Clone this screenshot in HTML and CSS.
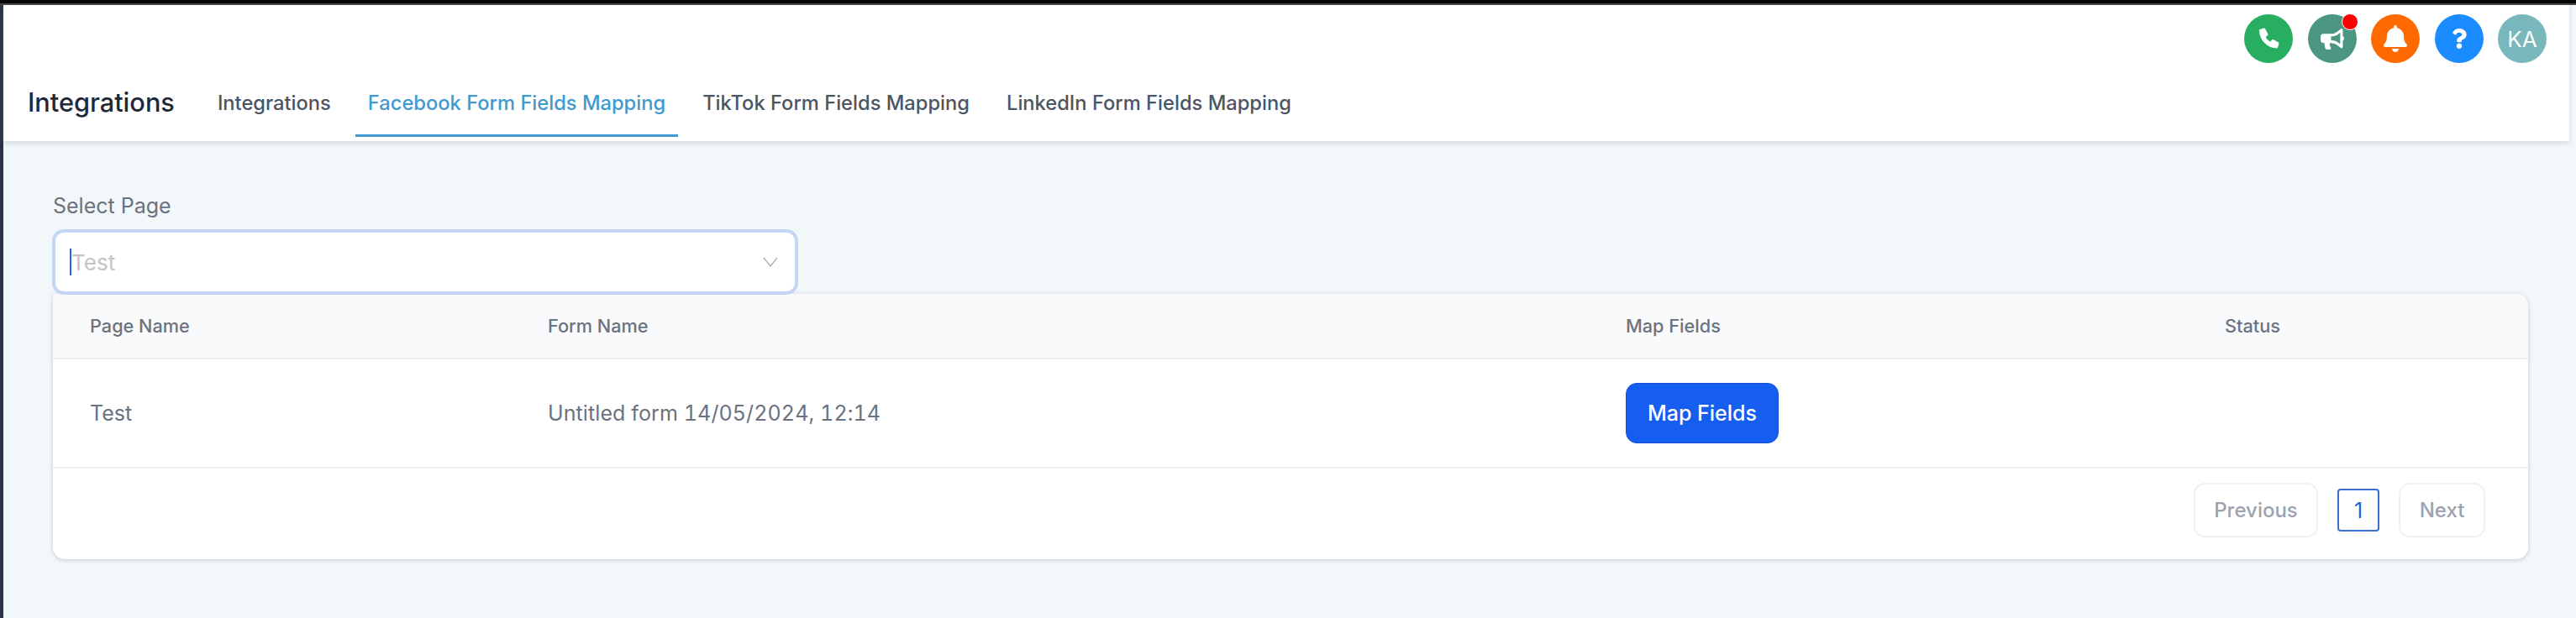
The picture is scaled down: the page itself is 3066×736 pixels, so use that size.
FILE: index.html
```html
<!DOCTYPE html>
<html lang="en">
<head>
<meta charset="utf-8">
<title>Integrations</title>
<link rel="stylesheet" href="styles.css">
</head>
<body>
<div class="topbar"></div>
<div class="shell">
  <div class="rail"></div>
  <main class="main">
    <header class="header">
      <div class="actions">
        <span class="circle c-green"><svg class="ic-phone" viewBox="0 0 26 26"><path d="M3 3 L8 1.5 L11.5 8 L8.5 11 C10 14.5 12 16.5 15.5 18 L18 15 L24.5 18.5 L23 23.5 C12 23.5 3 14 3 3Z"/></svg></span>
        <span class="circle c-teal"><svg class="ic-horn" viewBox="0 0 576 512"><path d="M576 240c0-23.63-12.95-44.04-32-55.12V32.01C544 23.26 537.02 0 512 0c-7.12 0-14.19 2.38-19.98 7.02l-85.03 68.03C364.28 109.19 310.66 128 256 128H64c-35.35 0-64 28.65-64 64v96c0 35.35 28.65 64 64 64h33.7c-1.39 10.48-2.18 21.14-2.18 32 0 39.77 9.26 77.35 25.56 110.94 5.19 10.69 16.52 17.06 28.4 17.06h74.28c26.05 0 41.69-29.84 25.9-50.56-16.4-21.52-26.15-48.36-26.15-77.44 0-11.11 1.62-21.79 4.41-32H256c54.66 0 108.28 18.81 150.98 52.95l85.03 68.03a32.023 32.023 0 0 0 19.98 7.02c24.92 0 32-22.78 32-32V295.13C563.05 284.04 576 263.63 576 240zm-96 141.42l-33.05-26.44C392.95 311.78 325.12 288 256 288v-96c69.12 0 136.95-23.78 190.95-66.98L480 98.58v282.84z"/></svg><span class="dot"></span></span>
        <span class="circle c-orange"><svg class="ic-bell" viewBox="0 0 448 512"><path d="M224 512c35.32 0 63.97-28.65 63.97-64H160.03c0 35.35 28.65 64 63.97 64zm215.39-149.71c-19.32-20.76-55.47-51.99-55.47-154.29 0-77.7-54.48-139.9-127.94-155.16V32c0-17.67-14.32-32-31.98-32s-31.98 14.33-31.98 32v20.84C118.56 68.1 64.08 130.3 64.08 208c0 102.3-36.15 133.53-55.47 154.29-6 6.45-8.66 14.16-8.61 21.71.11 16.4 12.98 32 32.1 32h383.8c19.12 0 32-15.6 32.1-32 .05-7.55-2.61-15.27-8.61-21.71z"/></svg></span>
        <span class="circle c-blue"><svg class="ic-help" viewBox="0 0 384 512"><path d="M202.021 0C122.202 0 70.503 32.703 29.914 91.026c-7.363 10.58-5.093 25.086 5.178 32.874l43.138 32.709c10.373 7.865 25.132 6.026 33.253-4.148 25.049-31.381 43.63-49.449 82.757-49.449 30.764 0 68.816 19.799 68.816 49.631 0 22.552-18.617 34.134-48.993 51.164-35.423 19.86-82.299 44.576-82.299 106.405V320c0 13.255 10.745 24 24 24h72.471c13.255 0 24-10.745 24-24v-5.773c0-42.86 125.268-44.645 125.268-160.627C377.504 66.256 286.902 0 202.021 0zM192 373.459c-38.196 0-69.271 31.075-69.271 69.271 0 38.195 31.075 69.27 69.271 69.27s69.271-31.075 69.271-69.271-31.075-69.27-69.271-69.27z"/></svg></span>
        <span class="circle c-avatar">KA</span>
      </div>
      <div class="titlebar">
        <h1 class="title">Integrations</h1>
        <nav class="tabs">
          <a class="tab">Integrations</a>
          <a class="tab tab-active">Facebook Form Fields Mapping</a>
          <a class="tab">TikTok Form Fields Mapping</a>
          <a class="tab">LinkedIn Form Fields Mapping</a>
        </nav>
      </div>
    </header>
    <section class="content">
      <label class="field-label">Select Page</label>
      <div class="select">
        <span class="caret"></span>
        <span class="select-value">Test</span>
        <svg class="chevron" viewBox="0 0 18 12"><path d="M1 1l8 10 8-10"/></svg>
      </div>
      <div class="card">
        <div class="row row-head">
          <div>Page Name</div>
          <div>Form Name</div>
          <div>Map Fields</div>
          <div>Status</div>
        </div>
        <div class="row row-body">
          <div>Test</div>
          <div class="form-name">Untitled form 14/05/2024, 12:14</div>
          <div><button class="btn-primary">Map Fields</button></div>
          <div></div>
        </div>
        <div class="pager">
          <button class="pager-btn pager-prev">Previous</button>
          <span class="pager-num">1</span>
          <button class="pager-btn pager-next">Next</button>
        </div>
      </div>
    </section>
  </main>
</div>
</body>
</html>
```
FILE: styles.css
```css
* { box-sizing: border-box; }
html, body { margin: 0; padding: 0; }
body {
  width: 3066px;
  height: 736px;
  overflow: hidden;
  background: #f2f7fa;
  font-family: Inter, "Liberation Sans", sans-serif;
}
.topbar {
  height: 6px;
  background: #060606;
  border-bottom: 2px solid #454545;
}
.shell { display: flex; height: 730px; }
.rail { width: 4px; background: #2a3648; flex: none; }
.main { flex: 1; min-width: 0; }
.header {
  width: 3054px;
  height: 162px;
  background: #fff;
  box-shadow: 0 2px 6px rgba(100, 116, 139, 0.25);
  position: relative;
}
.actions {
  display: flex;
  justify-content: flex-end;
  gap: 17.5px;
  padding: 11px 27px 0 0;
}
.circle {
  width: 58px;
  height: 58px;
  border-radius: 50%;
  display: flex;
  align-items: center;
  justify-content: center;
  position: relative;
  color: #fff;
  fill: #fff;
}
.c-green { background: #27ae60; }
.c-teal { background: #4a9680; }
.c-orange { background: #ff6a00; }
.c-blue { background: #1a8cff; }
.c-avatar { background: #78b7bb; font-size: 26px; }
.ic-phone { width: 26px; height: 26px; stroke: #fff; stroke-width: 2; stroke-linejoin: round; }
.ic-horn { width: 28px; height: 25px; }
.ic-bell { width: 28px; height: 32px; }
.ic-help { width: 18px; height: 24px; }
.dot {
  position: absolute;
  top: -1px;
  right: -2px;
  width: 20px;
  height: 20px;
  border-radius: 50%;
  background: #f00;
  border: 1px solid #fff;
}
.titlebar {
  display: flex;
  align-items: flex-start;
  margin-top: 16px;
  padding-left: 29px;
}
.title {
  margin: 11px 36px 0 0;
  font-size: 30.7px;
  line-height: 40px;
  font-weight: 500;
  color: #1f2937;
}
.tabs { display: flex; gap: 14px; }
.tab {
  display: block;
  padding: 0 15px;
  height: 72px;
  line-height: 64px;
  font-size: 23.7px;
  font-weight: 500;
  color: #4b5563;
  white-space: nowrap;
}
.tab-active {
  color: #4299cf;
  border-bottom: 3px solid #4299cf;
}
.content { padding: 62px 0 0 59px; }
.field-label {
  display: block;
  font-size: 25px;
  line-height: 30px;
  color: #6b7280;
  margin-bottom: 13px;
}
.select {
  width: 888px;
  height: 78px;
  margin-left: -1px;
  background: #fff;
  border: 4px solid #c5d6f4;
  border-radius: 14px;
  display: flex;
  align-items: center;
  padding: 0 20px 0 17px;
  position: relative;
  z-index: 1;
}
.caret { width: 2px; height: 32px; background: #2563eb; flex: none; }
.select-value { font-size: 26px; color: #c4c4c4; flex: 1; }
.chevron { width: 18px; height: 12px; fill: none; stroke: #a9b0b8; stroke-width: 1.4; }
.card {
  width: 2946px;
  height: 316px;
  margin-top: -1px;
  background: #fff;
  border-radius: 0 14px 14px 14px;
  box-shadow: 0 1px 5px rgba(100, 116, 139, 0.35);
  overflow: hidden;
}
.row {
  display: grid;
  grid-template-columns: 545px 1283px 713px 1fr;
  padding-left: 44px;
  align-items: center;
  border-bottom: 2px solid #eef1f4;
}
.row-head {
  height: 78px;
  background: #f8fafb;
  font-size: 21.7px;
  font-weight: 500;
  color: #6b7280;
}
.row-body {
  height: 130px;
  font-size: 25px;
  color: #6b7280;
}
.form-name { font-variant-numeric: tabular-nums; letter-spacing: 0.1px; }
.btn-primary {
  width: 182px;
  height: 72px;
  border: 1px solid #1d4ed8;
  border-radius: 13px;
  background: #155eef;
  color: #fff;
  font-family: inherit;
  font-size: 25px;
  font-weight: 500;
}
.pager {
  display: flex;
  justify-content: flex-end;
  align-items: center;
  height: 108px;
  padding: 0 51px 9px 0;
}
.pager-btn {
  height: 65px;
  background: #fff;
  border: 2px solid #eef1f4;
  border-radius: 13px;
  color: #9ca3af;
  font-family: inherit;
  font-size: 24px;
  font-weight: 500;
}
.pager-prev { width: 148px; }
.pager-next { width: 103px; }
.pager-num {
  width: 50px;
  height: 51px;
  margin: 0 23px 0 23px;
  border: 2px solid #3b6fd4;
  border-radius: 4px;
  color: #2563c9;
  font-size: 25px;
  display: flex;
  align-items: center;
  justify-content: center;
}
```
